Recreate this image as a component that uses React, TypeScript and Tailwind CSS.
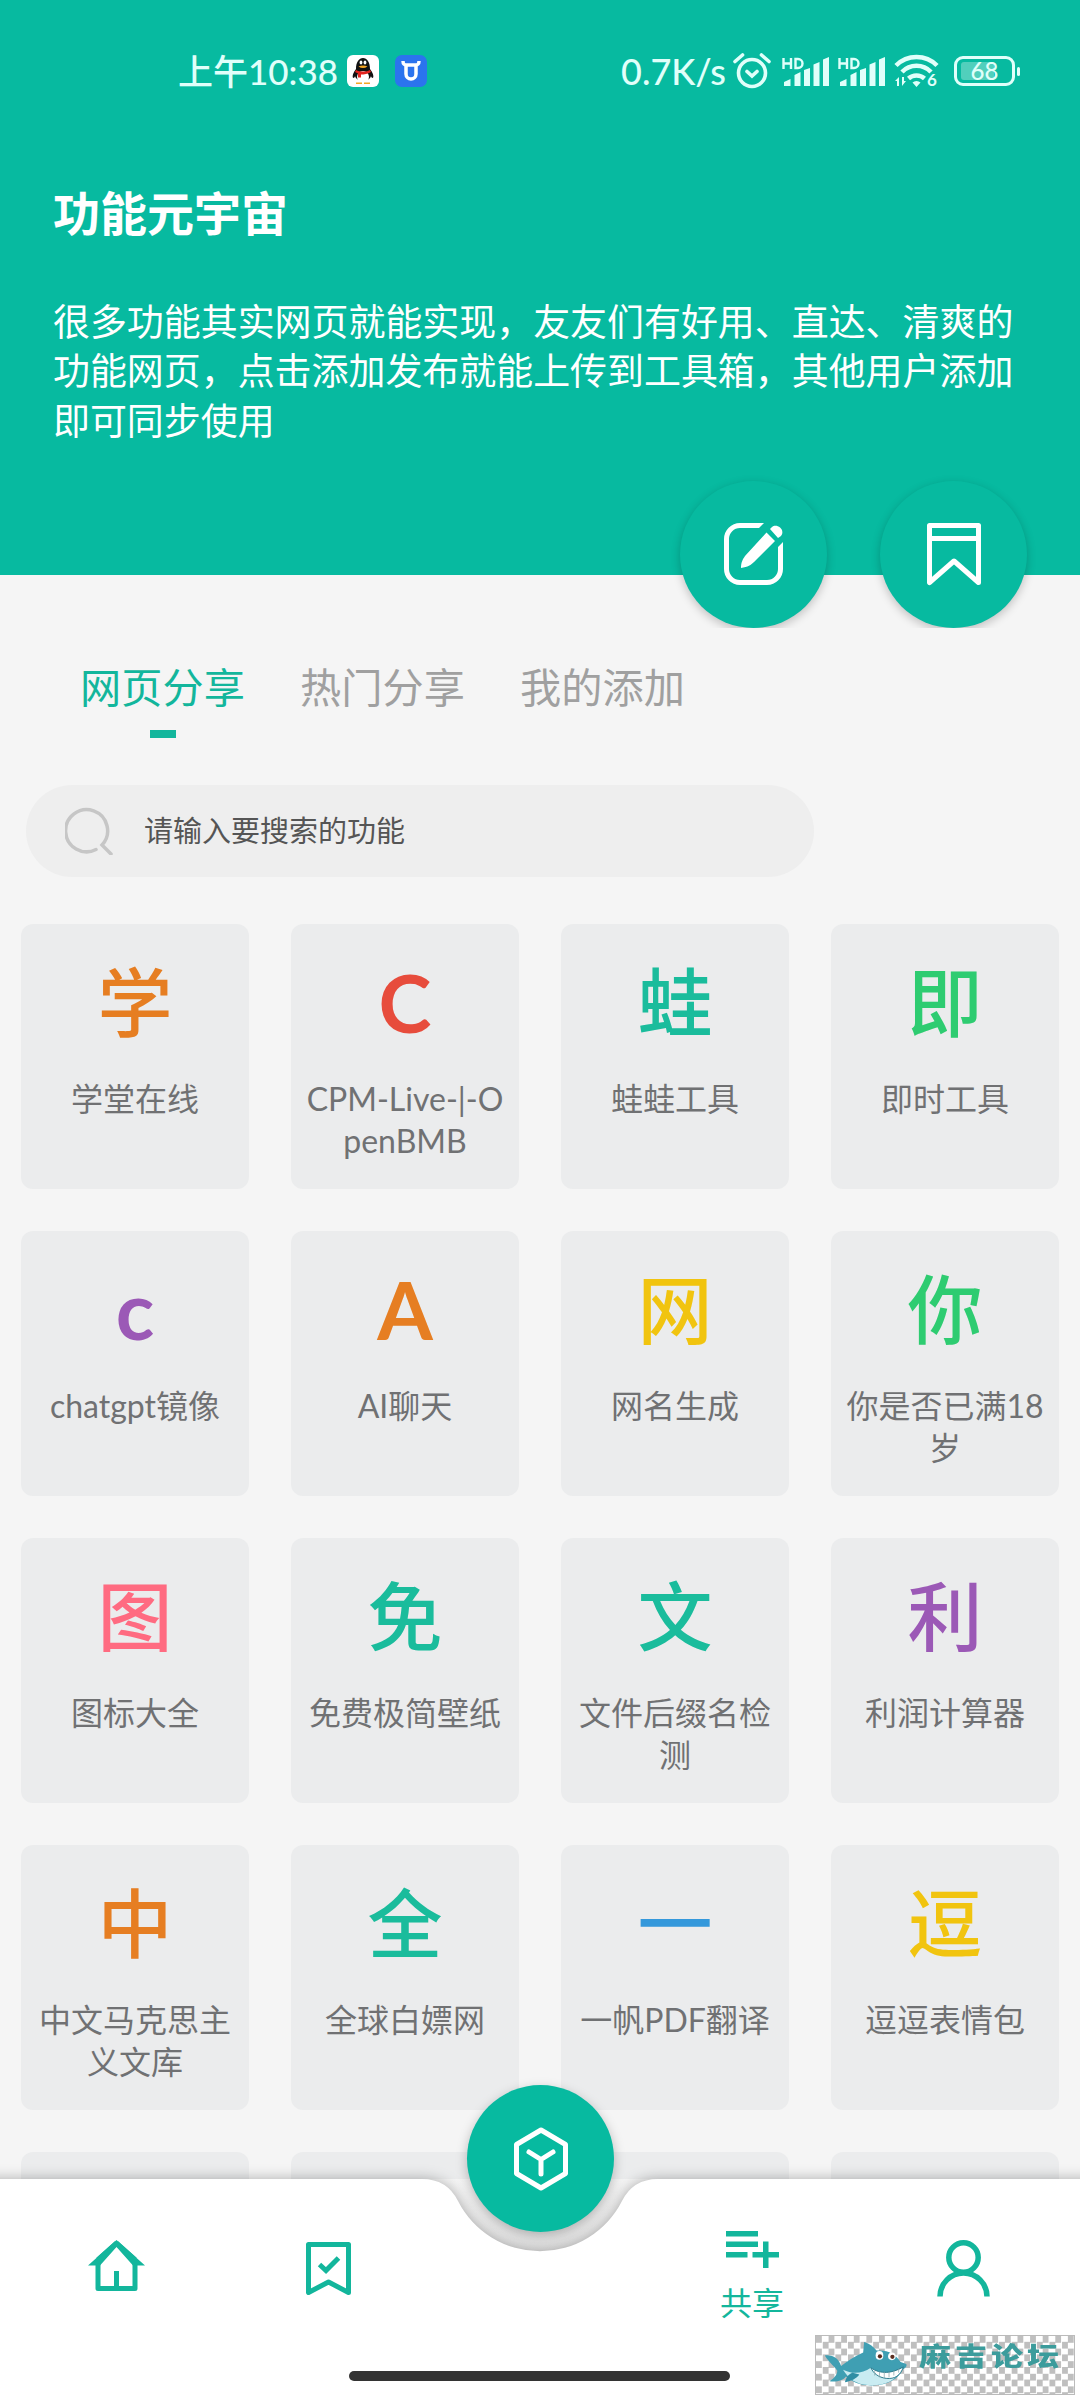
import { clsx } from "clsx";

const sites = [
  { letter: "学", name: "学堂在线", color: "text-[#e67e22]" },
  { letter: "C", name: "CPM-Live-|-OpenBMB", color: "text-[#e74c3c]" },
  { letter: "蛙", name: "蛙蛙工具", color: "text-[#1abc9c]" },
  { letter: "即", name: "即时工具", color: "text-[#2ecc71]" },
  { letter: "c", name: "chatgpt镜像", color: "text-[#9b59b6]" },
  { letter: "A", name: "AI聊天", color: "text-[#e67e22]" },
  { letter: "网", name: "网名生成", color: "text-[#f1c40f]" },
  { letter: "你", name: "你是否已满18岁", color: "text-[#2ecc71]" },
  { letter: "图", name: "图标大全", color: "text-[#ff6b81]" },
  { letter: "免", name: "免费极简壁纸", color: "text-[#1abc9c]" },
  { letter: "文", name: "文件后缀名检测", color: "text-[#1abc9c]" },
  { letter: "利", name: "利润计算器", color: "text-[#9b59b6]" },
  { letter: "中", name: "中文马克思主义文库", color: "text-[#e67e22]" },
  { letter: "全", name: "全球白嫖网", color: "text-[#1abc9c]" },
  { letter: "一", name: "一帆PDF翻译", color: "text-[#3498db]" },
  { letter: "逗", name: "逗逗表情包", color: "text-[#f1c40f]" },
];

const tabs = ["网页分享", "热门分享", "我的添加"];

function Signal() {
  return (
    <svg width="48" height="32" viewBox="0 0 48 32" fill="currentColor">
      <g fill="none" stroke="currentColor" strokeWidth="2.400">
        <path d="M1.500 3v11M9 3v11M2 8.500h7" />
        <path d="M13.500 4h2.500a4.500 4.500 0 0 1 0 9h-2.500z" />
      </g>
      <path d="M2 31v-4l6.500-3v7zM12.500 31V20l6-3v14zM22 31V15l6-2v18zM31.500 31V9.500l6-2.500v24zM41 31V4.500L47 2v29z" />
    </svg>
  );
}

function StatusBar() {
  return (
    <div className="flex h-[142px] items-center justify-between pl-[178px] pr-[60px] text-[#e0fffa]">
      <div className="flex items-center">
        <span className="w-[169px] whitespace-nowrap text-[35px] font-medium leading-none">上午10:38</span>
        <svg width="32" height="32" viewBox="0 0 32 32">
          <rect width="32" height="32" rx="6" fill="#fff" />
          <path d="M9 14c0-7 3-11 7-11s7 4 7 11c3 4 4 7 3 9-1 0-2-1-2-2-1 6-15 6-16 0 0 1-1 2-2 2-1-2 0-5 3-9z" fill="#111" />
          <ellipse cx="16" cy="22" rx="6" ry="6" fill="#fff" />
          <path d="M9 15c4 2 10 2 14 0l1 2c-3 2-7 2.500-10 2.500v3h-3v-4l-3-1.500z" fill="#e3231e" />
          <ellipse cx="14" cy="7.500" rx="1.400" ry="2" fill="#fff" />
          <ellipse cx="18" cy="7.500" rx="1.400" ry="2" fill="#fff" />
          <path d="M11.500 11.500c3-1.500 6-1.500 9 0-3 2-6 2-9 0zM9 27.500h6v1.500H9zM17 27.500h6v1.500h-6z" fill="#f5a623" />
        </svg>
        <svg className="ml-4" width="32" height="32" viewBox="0 0 32 32">
          <rect width="32" height="32" rx="7" fill="#2b74ee" />
          <path d="M8 6c0 3 1 4 4 4h8c3 0 4-1 4-4M11 10v9a5 5 0 0 0 10 0v-9" fill="none" stroke="#fff" strokeWidth="3.500" />
        </svg>
      </div>
      <div className="flex items-center">
        <span className="w-[112px] whitespace-nowrap text-[36px] font-medium leading-none">0.7K/s</span>
        <svg width="38" height="36" viewBox="0 0 38 36" fill="none" stroke="currentColor" strokeWidth="3.600" strokeLinecap="round">
          <circle cx="19" cy="20" r="13.500" />
          <path d="M2 8.500 9.500 2M36 8.500 28.500 2M14 18.500l5 4.500 5-4.500" />
        </svg>
        <div className="ml-[11px] flex gap-2">
          <Signal />
          <Signal />
        </div>
        <svg className="ml-2 overflow-visible" width="46" height="34" viewBox="0 0 46 34">
          <g fill="none" stroke="currentColor" strokeWidth="4.500">
            <path d="M2 11.500a29 29 0 0 1 41 0M8 18a20 20 0 0 1 29 0M14.500 24.500a12 12 0 0 1 16 0" />
          </g>
          <path d="M18.500 28.500a6 6 0 0 1 8 0l-4 4.500zM1 27l4-4v9H3v-5zM8 23v9l4-5h-2v-4z" fill="currentColor" />
          <text x="33" y="32" fontSize="17" fontWeight="700" fill="currentColor">6</text>
        </svg>
        <div className="ml-[14px] flex items-center gap-[2px]">
          <div className="relative flex h-[30px] w-[61px] items-center justify-center rounded-[9px] border-[3px] border-current">
            <div className="absolute left-[4px] top-[3px] h-[18px] w-[33px] rounded-[3px] bg-white/30" />
            <span className="relative text-[24px] font-medium leading-none">68</span>
          </div>
          <div className="h-[9px] w-[3px] rounded bg-current" />
        </div>
      </div>
    </div>
  );
}

function Header() {
  return (
    <header className="h-[575px] bg-[#07baa0] text-white">
      <StatusBar />
      <div className="px-[53px]">
        <h1 className="mt-[35px] text-[47px] font-bold leading-[72px]">功能元宇宙</h1>
        <p className="mt-[49px] w-[980px] text-[36.950px] leading-[49.300px]">
          很多功能其实网页就能实现，友友们有好用、直达、清爽的功能网页，点击添加发布就能上传到工具箱，其他用户添加即可同步使用
        </p>
      </div>
      <div className="mt-[24px] flex h-[158px] justify-end gap-[53px] overflow-hidden pr-[53px] pt-[11px]">
        <button className="flex size-[147px] shrink-0 items-center justify-center rounded-full bg-[#07baa0] shadow-[0_3px_10px_rgba(0,0,0,0.22)]">
          <svg width="60" height="63" viewBox="0 0 60 63" fill="none">
            <path d="M40 0H16A16 16 0 0 0 0 16v30a16 16 0 0 0 16 16h27a16 16 0 0 0 16-16V19l-5 5v22a11 11 0 0 1-11 11H16A11 11 0 0 1 5 46V16A11 11 0 0 1 16 5h19z" fill="#fff" />
            <path d="M42.500 9.500l8.500 8.500-21 21c-3 3-6 5-13 6 0-6 2-9 4-12zM46 6l2-2c4-4 14 2 9 9l-3 2z" fill="#fff" />
          </svg>
        </button>
        <button className="flex size-[147px] shrink-0 items-center justify-center rounded-full bg-[#07baa0] shadow-[0_3px_10px_rgba(0,0,0,0.22)]">
          <svg width="54" height="63" viewBox="0 0 54 63" fill="none" stroke="#fff" strokeWidth="5" strokeLinejoin="round">
            <path d="M2.500 2.500h49v57L27 38 2.500 59.500zM2.500 15.500h49" />
          </svg>
        </button>
      </div>
    </header>
  );
}

function NavBar() {
  return (
    <nav className="relative h-[221px] bg-linear-to-b from-[#f5f5f5] to-[#e4e4e4] to-[75px] text-[#13b69c]">
      {/* White bar with the notch cut out for the centre button */}
      <svg className="absolute -top-[21px] left-0" width="1080" height="242" viewBox="0 0 1080 242">
        <path
          d="M-40 21H422Q447 21 458 43A92 92 0 0 0 622 43Q633 21 658 21H1120V300H-40z"
          fill="#fff"
          className="drop-shadow-[0_0_7px_rgba(0,0,0,0.3)]"
        />
      </svg>
      <button className="absolute -top-[94px] left-[467px] flex size-[147px] items-center justify-center rounded-full bg-[#07baa0] shadow-[0_4px_12px_rgba(0,0,0,0.25)]">
        <svg width="56" height="64" viewBox="0 0 56 64" fill="none" stroke="#fff" strokeWidth="5" strokeLinejoin="round" strokeLinecap="round">
          <path d="M28 3 52.500 17.500v29L28 61 3.500 46.500v-29zM16 25l12 7.500L40 25M28 32.500V47" />
        </svg>
      </button>
      <div className="relative flex justify-between pl-[88px] pr-[90px] pt-[52px]">
        <div className="flex w-[263px] justify-between pt-[9px]">
          <svg width="57" height="53" viewBox="0 0 57 53" fill="none" stroke="currentColor" strokeWidth="5" strokeLinejoin="round">
            <path d="M10 22v26.500h37V22M28.500 31v18M28.500 3 10 19.500M28.500 3 47 19.500" />
            <path d="M28.500 0 57 25.500H45L28.500 7 12 25.500H0z" fill="currentColor" stroke="none" />
          </svg>
          <svg className="mt-[2px]" width="45" height="53" viewBox="0 0 45 53" fill="none" stroke="currentColor" strokeWidth="5" strokeLinejoin="round">
            <path d="M2.500 2.500h40v48l-20-10.500-20 10.500z" />
            <path d="M13.500 22.500l6.500 6L32.500 16" strokeLinejoin="miter" />
          </svg>
        </div>
        <div className="flex w-[271px] justify-between">
          <div className="flex w-[66px] flex-col items-center">
            <svg width="53" height="37" viewBox="0 0 53 37" fill="currentColor">
              <path d="M0 0h32v5.500H0zM0 10.500h32V16H0zM0 21h21.500v5.500H0zM37 10.500h5.500V21H53v5.500H42.500V37H37V26.500H26.500V21H37z" />
            </svg>
            <span className="mt-[17px] whitespace-nowrap text-[32px] leading-[36px]">共享</span>
          </div>
          <svg className="mt-[9px]" width="53" height="57" viewBox="0 0 53 57" fill="none" stroke="currentColor" strokeWidth="5.500">
            <circle cx="26.500" cy="17.500" r="14.700" />
            <path d="M3 56.500a23.500 23.500 0 0 1 47 0" />
          </svg>
        </div>
      </div>
      <div className="absolute bottom-[19px] left-[349px] h-[10px] w-[381px] rounded-full bg-[#333]" />
      <Watermark />
    </nav>
  );
}

function Watermark() {
  return (
    <div className="absolute bottom-[5px] left-[815px] flex h-[60px] w-[260px] border border-[#bbb] bg-[repeating-conic-gradient(#fff_0%_25%,#bfbfbf_0%_50%)] bg-[length:12.600px_12.600px]">
      <svg className="ml-[6px] mt-[5px] shrink-0" width="90" height="46" viewBox="0 0 90 48">
        <path d="M1 15c9-1 15 4 17 11 7-5 14-10 23-14l1-11c6 2 10 5 13 9 12-1 20 4 25 12l6 2c1 3-1 4-4 6-4 10-18 18-38 16-9-1-15-4-21-9-3 4-9 6-17 5 6-4 8-8 8-11C11 26 5 22 1 15z" fill="#3f9fb3" />
        <path d="M20 30c10 5 20 4 29-2 10 8 21 9 31 2-5 12-17 17-34 16-12-1-20-6-26-16z" fill="#c9ecf2" />
        <path d="M49 28c10 7 22 6 34-1-3 9-9 13-18 12-8-1-13-5-16-11z" fill="#fff" stroke="#27788b" strokeWidth="1" />
        <path d="M53 31v5M58 32v6M63 32v7M68 32v6M73 31v5M78 29v4" stroke="#8ba7ad" strokeWidth="0.800" />
        <ellipse cx="58" cy="15" rx="4" ry="4.500" fill="#fff" />
        <ellipse cx="71" cy="16" rx="4" ry="4" fill="#fff" />
        <circle cx="58.500" cy="16" r="2.200" fill="#5b2d1e" />
        <circle cx="71.500" cy="16.500" r="2.200" fill="#5b2d1e" />
        <path d="M30 33c-4 1-7 5-8 10 7-1 12-4 15-8z" fill="#2f8ea4" />
      </svg>
      <span className="ml-[7px] mt-[6px] origin-top scale-y-[0.800] whitespace-nowrap text-[32px] font-black leading-[36px] tracking-[4px] text-[#3c9c9c]">
        麻吉论坛
      </span>
    </div>
  );
}

export default function App() {
  return (
    <main className="flex h-[2400px] w-[1080px] flex-col overflow-hidden bg-[#f5f5f5] font-[Lato,'Noto_Sans_CJK_SC',sans-serif]">
      <Header />

      {/* Tabs */}
      <div className="mt-[82px] flex shrink-0 gap-[55px] pl-[80px]">
        {tabs.map((tab, idx) => (
          <button
            key={tab}
            className={clsx(
              "flex h-[81px] w-[165px] flex-col items-center justify-between whitespace-nowrap text-[41.200px] leading-[60px]",
              idx === 0 ? "text-[#13b69c]" : "text-[#a0a0a0]"
            )}
          >
            {tab}
            {idx === 0 && <span className="h-[8px] w-[26px] bg-[#13b69c]" />}
          </button>
        ))}
      </div>

      {/* Search */}
      <div className="ml-[26px] mt-[47px] flex h-[92px] w-[788px] shrink-0 items-center gap-[31px] rounded-full bg-[#eeeeee] pl-[39px] text-[29px] text-[#555]">
        <svg width="48" height="48" viewBox="0 0 48 48" fill="none" stroke="#c6c6c6" strokeWidth="3.500" strokeLinecap="round">
          <path d="M31 42.500A21 21 0 1 1 37 38l9 9" />
        </svg>
        请输入要搜索的功能
      </div>

      {/* Site grid, last row runs under the nav bar */}
      <div className="mt-[47px] grid min-h-0 flex-1 auto-rows-[265px] grid-cols-4 gap-[42px] overflow-hidden px-[21px]">
        {sites.map((site) => (
          <div key={site.name} className="flex flex-col items-center rounded-[12px] bg-[#ebeced] px-2 pt-[28px]">
            <div
              className={clsx(
                "leading-[100px]",
                /[a-z]/i.test(site.letter) ? "text-[80px] font-bold" : "text-[75px] font-medium",
                site.color
              )}
            >
              {site.letter}
            </div>
            <div className="mt-[26px] break-all text-center text-[32px] leading-[42px] text-[#707173]">{site.name}</div>
          </div>
        ))}
        {[0, 1, 2, 3].map((idx) => (
          <div key={idx} className="rounded-[12px] bg-[#ebeced]" />
        ))}
      </div>

      <NavBar />
    </main>
  );
}
